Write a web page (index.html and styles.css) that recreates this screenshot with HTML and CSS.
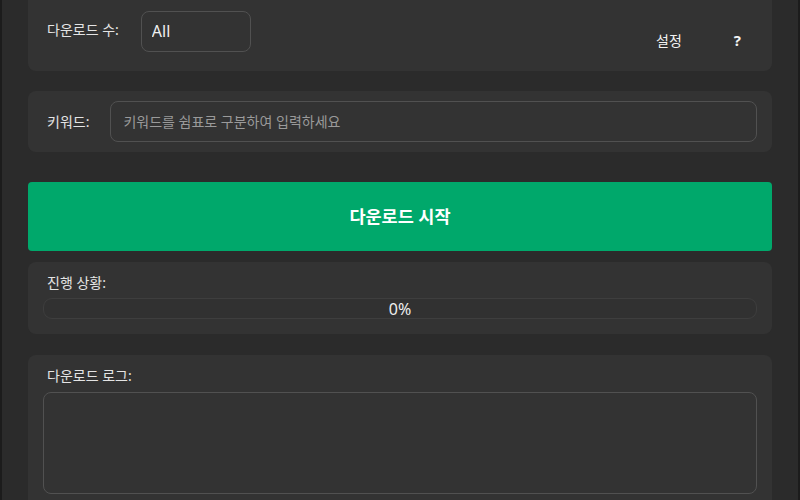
FILE: index.html
```html
<!DOCTYPE html>
<html lang="ko">
<head>
<meta charset="utf-8">
<title>다운로더</title>
<link rel="stylesheet" href="styles.css">
</head>
<body>
<main class="app">
  <section class="card card-top">
    <label class="label" for="count">다운로드 수:</label>
    <input id="count" class="field field-count" type="text" value="All">
    <div class="actions">
      <button class="link-btn" type="button">설정</button>
      <button class="link-btn help" type="button">?</button>
    </div>
  </section>

  <section class="card card-row">
    <label class="label" for="keywords">키워드:</label>
    <input id="keywords" class="field field-keywords" type="text" placeholder="키워드를 쉼표로 구분하여 입력하세요">
  </section>

  <button class="start-btn" type="button">다운로드 시작</button>

  <section class="card card-stack card-progress">
    <div class="label">진행 상황:</div>
    <div class="progress"><span class="progress-text">0%</span></div>
  </section>

  <section class="card card-stack card-log">
    <div class="label">다운로드 로그:</div>
    <textarea class="log" readonly></textarea>
  </section>
</main>
</body>
</html>
```

FILE: styles.css
```css
html, body {
  margin: 0;
  padding: 0;
  overflow: hidden;
}

body {
  background: #2b2b2b;
  border-left: 2px solid #1c1c1c;
  border-right: 2px solid #1c1c1c;
  height: 500px;
  box-sizing: border-box;
  font-family: "Noto Sans", "Noto Sans CJK KR", sans-serif;
  color: #e6e6e6;
}

.app {
  padding: 0 26px;
  display: flex;
  flex-direction: column;
}

.card {
  background: #333333;
  border-radius: 8px;
  padding: 10px 15px;
}

.label {
  font-size: 14px;
  line-height: 18px;
  padding: 0 4px;
  color: #e4e4e4;
  white-space: nowrap;
}

.card-top {
  margin-top: -10px;
  padding: 21px 15px 13px;
  display: flex;
  align-items: flex-start;
  gap: 18px;
}

.card-top .label {
  margin-top: 10px;
}

.field {
  box-sizing: border-box;
  height: 41px;
  background: #333333;
  border: 1px solid #515151;
  border-radius: 8px;
  color: #f0f0f0;
  font-family: "Noto Sans", "Noto Sans CJK KR", sans-serif;
  outline: none;
}

.field-count {
  width: 110px;
  padding: 0 0 2px 10px;
  font-size: 16px;
}

.actions {
  margin-left: auto;
  margin-top: 11px;
  display: flex;
  gap: 21px;
}

.link-btn {
  height: 36px;
  background: transparent;
  border: none;
  color: #f2f2f2;
  font-family: "Noto Sans", "Noto Sans CJK KR", sans-serif;
  font-size: 14px;
  padding: 0 15px;
  cursor: pointer;
}

.link-btn.help {
  font-weight: 700;
  font-size: 15px;
  padding: 0 16px;
}

.card-row {
  margin-top: 20px;
  display: flex;
  align-items: center;
  gap: 17px;
}

.field-keywords {
  flex: 1;
  padding: 0 12px;
  font-size: 14px;
}

.field-keywords::placeholder {
  color: #9a9a9a;
}

.start-btn {
  margin-top: 30px;
  height: 69px;
  padding: 0 0 3px;
  background: #00a86b;
  border: none;
  border-radius: 4px;
  color: #ffffff;
  font-family: "Noto Sans", "Noto Sans CJK KR", sans-serif;
  font-size: 17.5px;
  font-weight: 700;
  cursor: pointer;
}

.card-stack {
  display: flex;
  flex-direction: column;
  padding: 12px 15px 15px;
}

.card-progress {
  margin-top: 11px;
}

.progress {
  margin-top: 6px;
  box-sizing: border-box;
  height: 21px;
  border: 1px solid #3e3e3e;
  border-radius: 9px;
  background: #313131;
  display: flex;
  align-items: center;
  justify-content: center;
}

.progress-text {
  font-size: 16px;
  color: #eeeeee;
}

.card-log {
  margin-top: 21px;
}

.log {
  margin-top: 7px;
  box-sizing: border-box;
  height: 102px;
  background: #333333;
  border: 1px solid #515151;
  border-radius: 8px;
  resize: none;
  outline: none;
  color: #e6e6e6;
}
```
